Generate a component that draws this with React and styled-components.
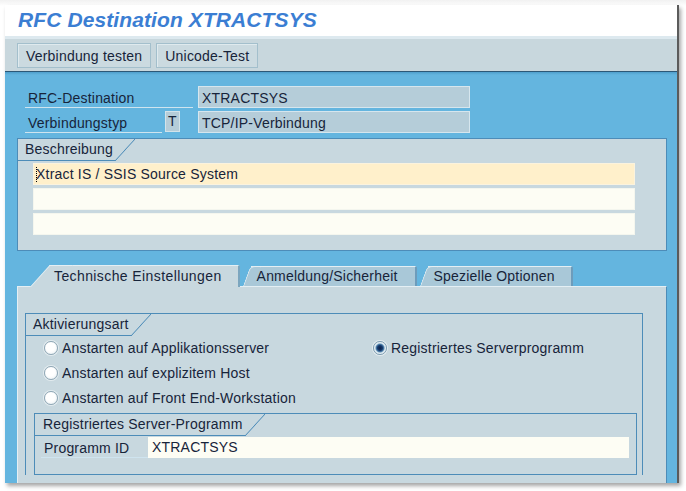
import React from 'react';
import styled, { createGlobalStyle, css } from 'styled-components';

const Globals = createGlobalStyle`
  html, body {
    margin: 0;
    padding: 0;
    background: #ffffff;
    font-family: "Liberation Sans", Arial, sans-serif;
  }
`;

const Stage = styled.div`
  width: 686px;
  height: 491px;
  padding: 5px 0 0 5px;
  box-sizing: border-box;
  background: linear-gradient(#f1f1f1, #ffffff 6px);
`;

const Win = styled.div`
  width: 672px;
  height: 478px;
  display: flex;
  flex-direction: column;
  overflow: hidden;
  border-right: 2px solid #5b5b5b;
  box-shadow: 2px 3px 4px rgba(0, 0, 0, 0.35);
  color: #17243a;
  font-size: 14px;
  letter-spacing: 0.2px;
`;

const TitleBar = styled.div`
  height: 31px;
  flex: none;
  background: #ffffff;
  padding-left: 13px;
  border-bottom: 3px solid #dde9ef;
`;

const Title = styled.h1`
  margin: 0;
  font-size: 21px;
  line-height: 30px;
  font-weight: bold;
  font-style: italic;
  letter-spacing: 0.1px;
  color: #3b7ed3;
`;

const Toolbar = styled.div`
  height: 33px;
  flex: none;
  background: #c8d7dd;
  border-bottom: 1px solid #2c5877;
  display: flex;
  align-items: flex-start;
  gap: 5px;
  padding: 4px 0 0 12px;
  box-sizing: border-box;
`;

const ToolButton = styled.button`
  height: 25px;
  padding: 0 8px;
  background: #cbdae0;
  border: 1px solid #a3bfcc;
  box-shadow: inset 1px 1px 0 #dfeaee;
  font-family: inherit;
  font-size: 14px;
  letter-spacing: 0.2px;
  color: #17243a;
`;

const Body = styled.div`
  flex: 1;
  background: linear-gradient(#4f9fcc, #64b5df 3px);
  padding: 14px 10px 0 12px;
  display: flex;
  flex-direction: column;
  overflow: hidden;
`;

const FieldRow = styled.div`
  display: flex;
  height: 22px;
  margin: 0 0 3px 8px;
`;

const LabelCell = styled.div`
  width: ${p => p.$w}px;
  height: 22px;
  box-sizing: border-box;
  padding: 2px 0 0 3px;
  line-height: 20px;
  border-bottom: 1px solid #cfe4ef;
`;

const KeyBox = styled.div`
  width: 15px;
  height: 21px;
  margin-left: 3px;
  box-sizing: border-box;
  background: #b5ccd8;
  border: 1px solid #d3e3ea;
  text-align: center;
  line-height: 18px;
`;

const ValueBox = styled.div`
  width: 272px;
  height: 22px;
  margin-left: ${p => p.$gap}px;
  box-sizing: border-box;
  background: #b5cdd9;
  border: 1px solid #d6e6ee;
  padding: 1px 0 0 3px;
  line-height: 20px;
`;

const Group = styled.div`
  background: #c8d8df;
  border: 1px solid #4d8cb8;
  flex: none;
  ${p => p.$fill && css`
    border-bottom: none;
  `}
`;

const GroupHeader = styled.div`
  position: relative;
  display: inline-block;
  height: 21px;
  line-height: 20px;
  padding: 0 2px 0 ${p => p.$pad || 7}px;
  border-bottom: 1px solid #4d8cb8;
  margin-right: 20px;

  &::after {
    content: '';
    position: absolute;
    right: -20px;
    top: 0;
    width: 20px;
    height: 22px;
    background: linear-gradient(to bottom right, transparent calc(50% - 0.8px), #4d8cb8 50%, transparent calc(50% + 0.8px));
  }
`;

const Lines = styled.div`
  display: flex;
  flex-direction: column;
  gap: 3px;
  padding: 2px 31px 15px 15px;
`;

const TextLine = styled.div`
  height: 22px;
  box-sizing: border-box;
  background: ${p => (p.$focus ? '#fff0cb' : '#fdfdf4')};
  border: 1px solid ${p => (p.$focus ? '#fbf3de' : '#f4f6ee')};
  padding-left: 2px;
  line-height: 20px;
  display: flex;
  align-items: center;
`;

const Caret = styled.span`
  display: inline-block;
  width: 0;
  height: 15px;
  border-left: 1px dotted #000;
  margin-right: -1px;
`;

const TabStrip = styled.div`
  display: flex;
  align-items: flex-end;
  height: 22px;
  margin-top: 13px;
  padding-left: 33px;
  flex: none;
  position: relative;
  z-index: 2;
`;

const Tab = styled.div`
  position: relative;
  z-index: ${p => (p.$active ? 2 : 1)};
  height: ${p => (p.$active ? 22 : 20)}px;
  margin-left: ${p => p.$slant + 3}px;
  margin-bottom: ${p => (p.$active ? -1 : 0)}px;
  padding: 0 ${p => p.$right}px 0 ${p => p.$left}px;
  box-sizing: border-box;
  line-height: ${p => (p.$active ? 21 : 19)}px;
  letter-spacing: ${p => (p.$active ? 0.4 : 0.2)}px;
  background: ${p => (p.$active ? '#c8d8df' : '#a9c8d8')};
  border-top: 1px solid #e4eff4;
  border-right: 2px solid ${p => (p.$active ? '#7ca6bf' : '#6d9cbb')};
  border-top-right-radius: 2px;
  isolation: isolate;

  &:first-child {
    margin-left: 0;
  }

  &::before {
    content: '';
    position: absolute;
    z-index: -1;
    top: -1px;
    bottom: 0;
    left: -${p => p.$slant}px;
    width: ${p => p.$slant + 2}px;
    background: inherit;
    border-top: 1px solid #e4eff4;
    border-left: 1px solid #e4eff4;
    border-top-left-radius: ${p => (p.$active ? 0 : 5)}px;
    transform: skewX(-${p => p.$angle}deg);
    transform-origin: bottom left;
  }
`;

const Panel = styled.div`
  flex: 1;
  background: #c8d8df;
  border-top: 1px solid #e4eff4;
  border-left: 1px solid #e4eff4;
  border-right: 1px solid #4d8cb8;
  padding: 26px 23px 0 7px;
  overflow: hidden;
`;

const RadioGrid = styled.div`
  display: grid;
  grid-template-columns: 329px 1fr;
  grid-auto-rows: 25px;
  padding-left: 18px;
  align-items: center;
`;

const RadioItem = styled.label`
  display: flex;
  align-items: center;
  gap: 4px;
  grid-column: ${p => p.$col};
  grid-row: ${p => p.$row};
  padding-bottom: 2px;
`;

const Radio = styled.span`
  width: 14px;
  height: 14px;
  box-sizing: border-box;
  border-radius: 50%;
  border: 1px solid #8fa7b5;
  background: radial-gradient(circle at 45% 40%, #ffffff 0, #ffffff 45%, #e3ecf0 100%);
  box-shadow: 0 0 0 1px rgba(255, 255, 255, 0.5);
  ${p => p.$checked && css`
    border-color: #7b9bb0;
    background: radial-gradient(circle at 50% 50%, #0c1f45 0, #163a6e 2.5px, #4d7ea8 3.8px, #d9e8f0 5px, #ffffff 6.5px);
  `}
`;

const SubGroup = styled.div`
  margin: 2px 0 0 8px;
  width: 601px;
  border: 1px solid #4d8cb8;
  padding-bottom: 16px;
`;

const ProgRow = styled.div`
  display: flex;
  height: 22px;
  margin: 0 7px 0 6px;
`;

const ProgValue = styled.div`
  flex: 1;
  height: 21px;
  margin-top: 1px;
  background: #fdfdf4;
  padding-left: 4px;
  line-height: 21px;
`;

export default function App() {
  return (
    <Stage>
      <Globals />
      <Win>
        <TitleBar>
          <Title>RFC Destination XTRACTSYS</Title>
        </TitleBar>
        <Toolbar>
          <ToolButton>Verbindung testen</ToolButton>
          <ToolButton>Unicode-Test</ToolButton>
        </Toolbar>
        <Body>
          <FieldRow>
            <LabelCell $w={168}>RFC-Destination</LabelCell>
            <ValueBox $gap={5}>XTRACTSYS</ValueBox>
          </FieldRow>
          <FieldRow>
            <LabelCell $w={137}>Verbindungstyp</LabelCell>
            <KeyBox>T</KeyBox>
            <ValueBox $gap={18}>TCP/IP-Verbindung</ValueBox>
          </FieldRow>

          <Group style={{ marginTop: 2 }}>
            <GroupHeader>Beschreibung</GroupHeader>
            <Lines>
              <TextLine $focus>
                <Caret />Xtract IS / SSIS Source System
              </TextLine>
              <TextLine />
              <TextLine />
            </Lines>
          </Group>

          <TabStrip>
            <Tab $active $slant={20} $angle={42} $left={4} $right={16}>Technische Einstellungen</Tab>
            <Tab $slant={8} $angle={20} $left={6} $right={17}>Anmeldung/Sicherheit</Tab>
            <Tab $slant={8} $angle={20} $left={6} $right={16}>Spezielle Optionen</Tab>
          </TabStrip>

          <Panel>
            <Group $fill>
              <GroupHeader>Aktivierungsart</GroupHeader>
              <RadioGrid>
                <RadioItem $col={1} $row={1}><Radio />Anstarten auf Applikationsserver</RadioItem>
                <RadioItem $col={1} $row={2}><Radio />Anstarten auf explizitem Host</RadioItem>
                <RadioItem $col={1} $row={3}><Radio />Anstarten auf Front End-Workstation</RadioItem>
                <RadioItem $col={2} $row={1}><Radio $checked />Registriertes Serverprogramm</RadioItem>
              </RadioGrid>
              <SubGroup>
                <GroupHeader $pad={8}>Registriertes Server-Programm</GroupHeader>
                <ProgRow>
                  <LabelCell $w={107}>Programm ID</LabelCell>
                  <ProgValue>XTRACTSYS</ProgValue>
                </ProgRow>
              </SubGroup>
            </Group>
          </Panel>
        </Body>
      </Win>
    </Stage>
  );
}
